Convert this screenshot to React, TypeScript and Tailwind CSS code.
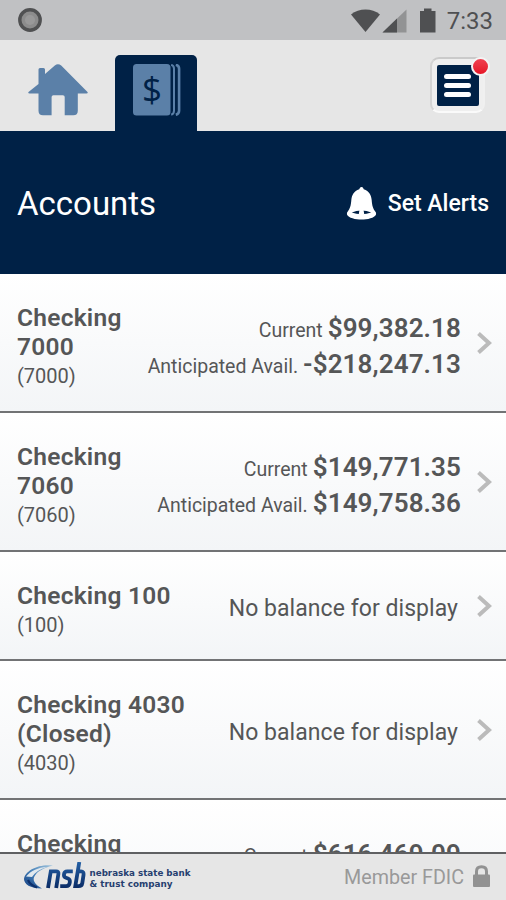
type Account = {
  name: string[];
  number: string;
  height: string;
  balances?: { label: string; amount: string }[];
};

const accounts: Account[] = [
  {
    name: ["Checking", "7000"],
    number: "(7000)",
    height: "h-[139px]",
    balances: [
      { label: "Current", amount: "$99,382.18" },
      { label: "Anticipated Avail.", amount: "-$218,247.13" },
    ],
  },
  {
    name: ["Checking", "7060"],
    number: "(7060)",
    height: "h-[139px]",
    balances: [
      { label: "Current", amount: "$149,771.35" },
      { label: "Anticipated Avail.", amount: "$149,758.36" },
    ],
  },
  { name: ["Checking 100"], number: "(100)", height: "h-[109px]" },
  { name: ["Checking 4030", "(Closed)"], number: "(4030)", height: "h-[139px]" },
  {
    name: ["Checking", "4040"],
    number: "(4040)",
    height: "h-[139px]",
    balances: [
      { label: "Current", amount: "$616,469.09" },
      { label: "Anticipated Avail.", amount: "$616,469.09" },
    ],
  },
];

function StatusBar() {
  return (
    <div className="flex h-10 shrink-0 items-center justify-between bg-[#c0c1c3] pl-[18px] pr-[13px]">
      <svg width="24" height="24" viewBox="0 0 24 24">
        <circle cx="12" cy="12" r="10.2" fill="#8c8c8c" stroke="#505152" strokeWidth="3.4" />
        <circle cx="12" cy="12" r="5" fill="#999" />
      </svg>
      <div className="flex items-center">
        <svg width="86" height="26" viewBox="0 0 86 26" fill="#4f5052">
          <path d="M1 7.500C9 .8 22 .8 30 7.500L15.500 25Z" />
          <path d="M56.500 2.500v23h-24z" fill="#929394" />
          <path d="M47 11.500v14H32.500z" />
          <path d="M74 1.500h7.500v2.600h4v21.400H70V4.100h4z" />
        </svg>
        <span className="ml-[11px] pt-0.5 text-[24px] leading-9 text-[#4f5052]">7:33</span>
      </div>
    </div>
  );
}

function TabBar() {
  return (
    <div className="flex h-[91px] shrink-0 items-end bg-[#e6e6e6]">
      <div className="flex h-full w-[115px] items-end pb-[15px] pl-7">
        <svg width="60" height="52" viewBox="0 0 60 52" fill="#5b80a8">
          <path d="M10.500 20V5.500q0-1.500 1.500-1.500h3.500q1.500 0 1.500 1.500V10L26.800 1.500q3.200-2.500 6.400 0L59.500 28q.8 1.500-1 1.500h-8.700v17.200q0 4.500-4.500 4.500h-8.600V33q0-1.800-1.800-1.800h-9.500q-1.800 0-1.800 1.800v18.200H15q-4.500 0-4.500-4.500V29.500H1.500q-1.800 0-1-1.500z" />
        </svg>
      </div>
      <div className="flex h-[76px] w-[82px] justify-center rounded-t-[5px] bg-[#002146] pt-[9px]">
        <svg width="48" height="52" viewBox="0 0 48 52" className="ml-px">
          <rect x="0" y="0" width="37.500" height="51.500" rx="3.500" fill="#5b80a8" />
          <path d="M38.200 .8q2.800.8 2.800 4v42q0 3.200-2.800 4" fill="none" stroke="#5b80a8" strokeWidth="2" />
          <path d="M42.800 .8q3.300.8 3.300 4v42q0 3.200-3.300 4" fill="none" stroke="#5b80a8" strokeWidth="2.600" />
          <text x="19" y="37.800" textAnchor="middle" fontFamily="Open Sans, sans-serif" fontSize="35" fill="#002146">$</text>
        </svg>
      </div>
      <div className="relative mb-[18px] ml-auto mr-[21px] flex h-14 w-[55px] items-center justify-center rounded-[9px] border-2 border-t-[#cacaca] border-l-[#d4d4d4] border-r-[#f0f0f0] border-b-[#fafafa] bg-[#efefef]">
        <div className="flex h-[41px] w-[42px] flex-col items-center justify-center gap-[4px] rounded-[2px] bg-[#002146]">
          <span className="h-[5px] w-[27px] rounded-full bg-white" />
          <span className="h-[5px] w-[27px] rounded-full bg-white" />
          <span className="h-[5px] w-[27px] rounded-full bg-white" />
        </div>
        <span className="absolute -right-[7px] -top-[2px] size-[19px] rounded-full border-2 border-[#f4f4f4] bg-linear-to-b from-[#f04050] to-[#e61225]" />
      </div>
    </div>
  );
}

function PageHeader() {
  return (
    <div className="flex h-[143px] shrink-0 items-center justify-between bg-[#002146] pl-[17px] pr-[17px] pt-[3px] text-white">
      <h1 className="text-[33px]">Accounts</h1>
      <div className="flex items-center gap-[11px]">
        <svg width="31" height="34" viewBox="0 0 32 34" className="-mt-[3px]">
          <path d="M16 .5q1.800 0 2.300 2.300C24 4.500 26 9 26.500 14c.4 6 1.500 9 3.500 11.500q1.500 1.500 1 3.300C29.500 32.500 22 34 16 34S2.500 32.500 1 28.800q-.5-1.800 1-3.300C4 23 5.100 20 5.500 14 6 9 8 4.500 13.700 2.800 14.200 .5 16 .5 16 .5z" fill="#fff" />
          <path d="M6 26.800q4.500-2 10-2t10 2q-4.500 1.800-10 1.800t-10-1.800z" fill="#002146" />
          <path d="M14 24h4l.8 4q-.8 1.600-2.800 1.600T13.200 28z" fill="#fff" />
        </svg>
        <span className="pt-px text-[23px] font-medium">Set Alerts</span>
      </div>
    </div>
  );
}

function AccountRow({ account }: { account: Account }) {
  return (
    <li
      className={`flex shrink-0 border-b-2 border-[#727375] bg-linear-to-b from-white to-[#f3f5f7] pl-[17px] pr-[14px] text-[#555657] ${account.height}`}
    >
      <div className="pt-[29px]">
        {account.name.map((line) => (
          <p
            key={line}
            className="whitespace-nowrap text-[24.5px] font-semibold leading-[29px] tracking-[0.25px]"
          >
            {line}
          </p>
        ))}
        <p className="text-[20px] leading-[30px]">{account.number}</p>
      </div>
      <div className="ml-auto flex items-center">
        {account.balances ? (
          <div className="mr-[15px] whitespace-nowrap pt-[6px] text-right">
            {account.balances.map((balance) => (
              <p key={balance.label} className="flex h-9 items-baseline justify-end gap-[5px] leading-9">
                <span className="text-[19.5px]">{balance.label}</span>
                <span className="text-[26px] font-semibold tracking-[0.1px]">{balance.amount}</span>
              </p>
            ))}
          </div>
        ) : (
          <p className="mr-[18px] pt-[7px] text-[23px] tracking-[0.05px]">No balance for display</p>
        )}
        <svg width="16" height="24" viewBox="0 0 16 24" className="shrink-0">
          <path d="M2.500 2.500L13 12 2.500 21.500" fill="none" stroke="#bbb" strokeWidth="4" />
        </svg>
      </div>
    </li>
  );
}

function Footer() {
  return (
    <footer className="flex h-12 shrink-0 items-center justify-between border-t-2 border-[#5f6062] bg-[#e6e6e6] pl-6 pr-4">
      <svg width="170" height="30" viewBox="0 0 170 30">
        <defs>
          <linearGradient id="swoosh" x1="0" y1="1" x2="1" y2="0">
            <stop offset="0" stopColor="#123d80" />
            <stop offset="0.500" stopColor="#4580b8" />
            <stop offset="1" stopColor="#a8c8de" />
          </linearGradient>
          <linearGradient id="letters" gradientUnits="userSpaceOnUse" x1="0" y1="0" x2="0" y2="27">
            <stop offset="0" stopColor="#2460a5" />
            <stop offset="1" stopColor="#0a2a63" />
          </linearGradient>
        </defs>
        <path d="M29 3.500C15 1.500 1 8.500 0 17c0 5 6 9.500 18 9.500C10 22 8 17.500 11 13.500 14 8.500 21 5.500 29 3.500z" fill="url(#swoosh)" />
        <path d="M2 14.500C7 8.500 14 5.500 23 5 16 7 11 10.500 8 15z" fill="#e0e8ee" />
        <path d="M4 18q2 5 9 7.500" fill="none" stroke="#0d306c" strokeWidth="2.200" />
        <g fill="none" stroke="url(#letters)" strokeWidth="3.800">
          <path d="M24 26l2.800-16.700h5.400q2.600 0 2.200 2.500L32.200 26" />
          <path d="M48.800 9.300h-5.600q-2.800 0-3.200 3-.4 2.800 2 3.500l2 .7q2.300.8 1.800 4-.5 3.600-3.600 3.600h-6" />
          <path d="M55.300 0l-4 24.100h3.300q3.200 0 3.700-3l1.200-8q.5-3.800-2.500-3.800h-3.500" />
        </g>
        <text x="65.500" y="13.500" fontFamily="DejaVu Sans, sans-serif" fontWeight="bold" fontSize="9" fill="#263f70" textLength="101" lengthAdjust="spacingAndGlyphs">nebraska state bank</text>
        <text x="65.500" y="25" fontFamily="DejaVu Sans, sans-serif" fontWeight="bold" fontSize="9" fill="#263f70" textLength="83" lengthAdjust="spacingAndGlyphs">&amp; trust company</text>
      </svg>
      <div className="flex items-center gap-[9px] text-[#999]">
        <span className="pt-0.5 text-[19.7px]">Member FDIC</span>
        <svg width="17" height="22" viewBox="0 0 17 22" className="-mt-px">
          <path d="M3.500 11V6.500q0-4.800 5-4.800t5 4.800V11" fill="none" stroke="#929292" strokeWidth="3" />
          <rect y="9.500" width="17" height="12.500" rx="1" fill="#929292" />
        </svg>
      </div>
    </footer>
  );
}

export default function App() {
  return (
    <main className="flex h-[900px] w-[506px] flex-col overflow-hidden bg-white font-[Roboto,sans-serif]">
      <StatusBar />
      <TabBar />
      <PageHeader />
      <ul className="flex min-h-0 flex-1 flex-col overflow-hidden">
        {accounts.map((account) => (
          <AccountRow key={account.number} account={account} />
        ))}
      </ul>
      <Footer />
    </main>
  );
}
